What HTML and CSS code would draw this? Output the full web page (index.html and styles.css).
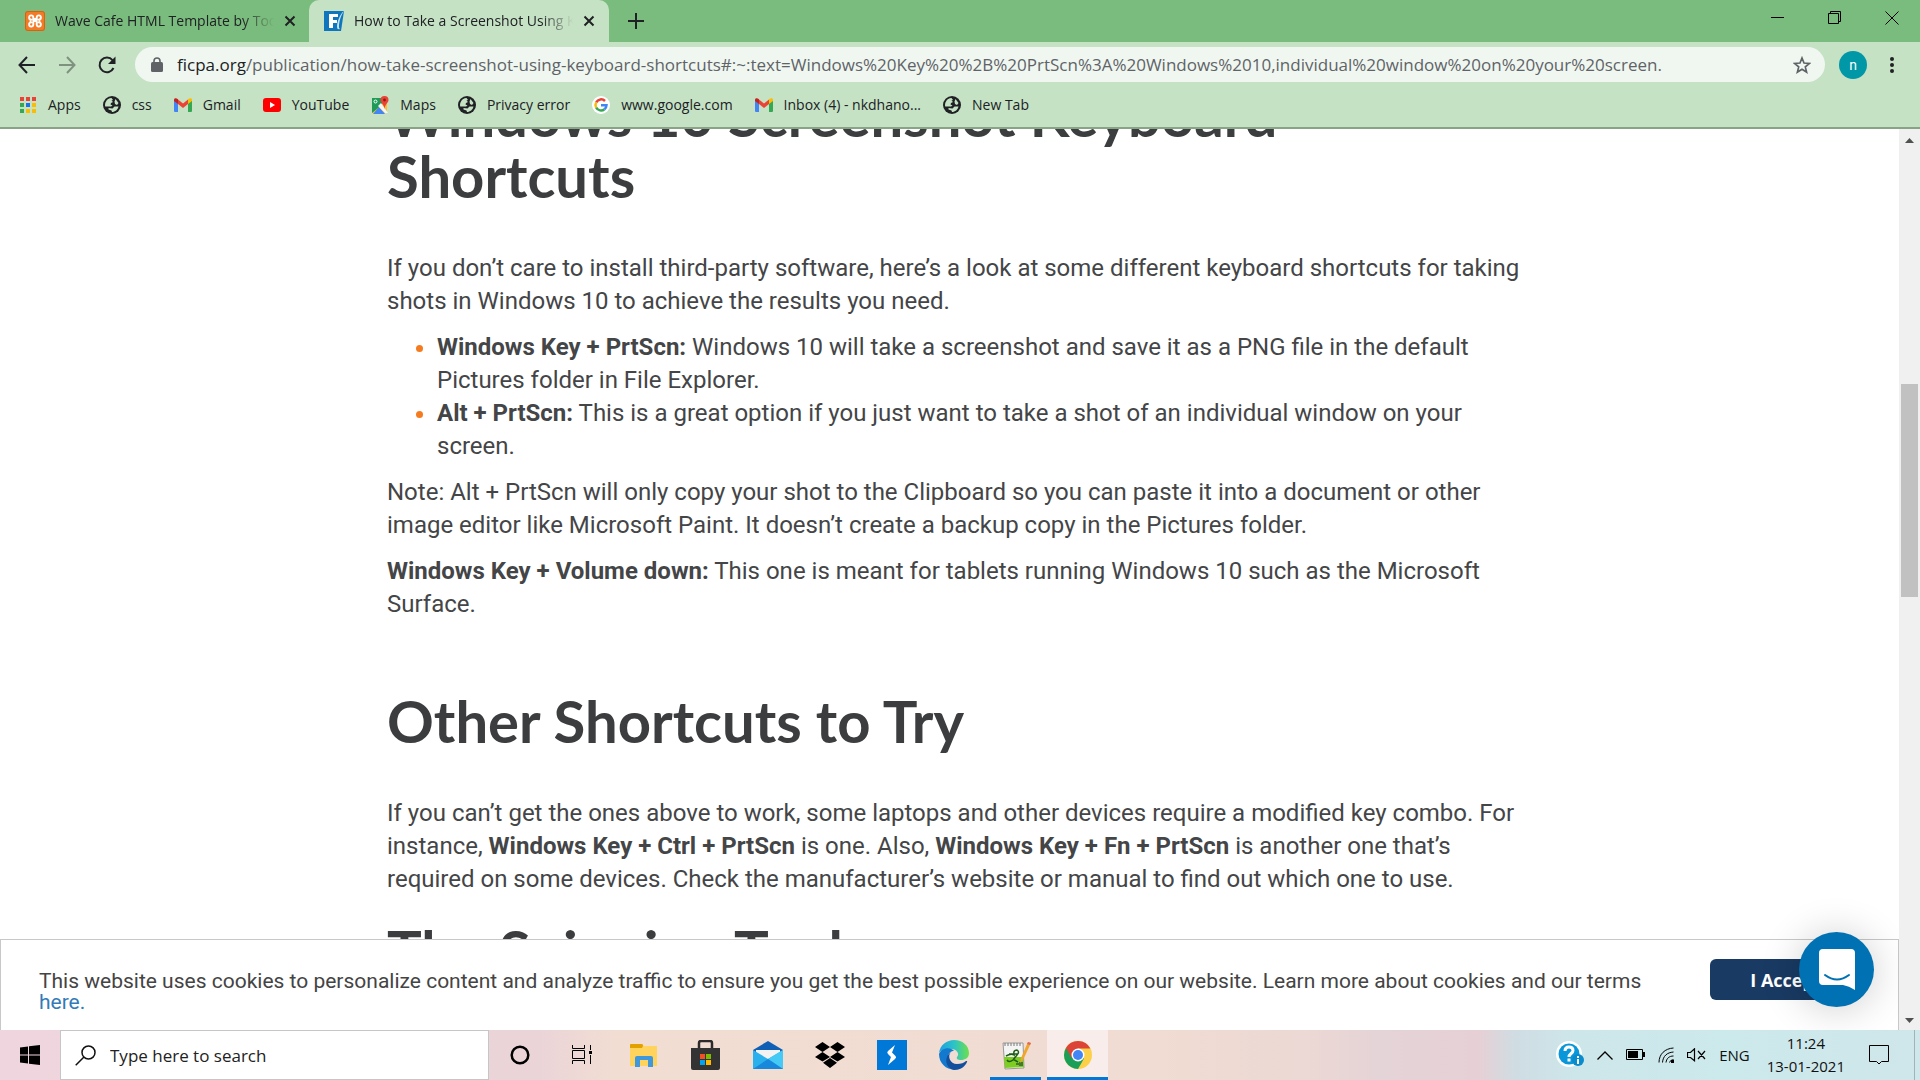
FILE: index.html
```html
<!DOCTYPE html>
<html lang="en">
<head>
<meta charset="utf-8">
<title>How to Take a Screenshot Using Keyboard Shortcuts</title>
<link rel="stylesheet" href="styles.css">
</head>
<body>
<svg class="defs" aria-hidden="true">
  <symbol id="globe" viewBox="0 0 18 18"><circle cx="9" cy="9" r="9" fill="#202124"/><path d="M3 5.500C4 3.500 6 2.300 8.500 2.100L10 4l-1.500.5L10 6 8 7 7.500 8.500 9.500 9.500 8 10.500H2.200C1.800 8.500 2.200 6.800 3 5.500ZM12.500 3l3 4L14 9 12 8 11.500 5.500ZM5.500 12 9.500 12.500 11.500 10.500 15.500 10.500C15 13.500 12 16 9 16L8.500 14.500 5.500 13.500Z" fill="#c5e2c5"/></symbol>
  <symbol id="gmail" viewBox="0 0 18 14"><path d="M0 2v11q0 1 1 1h3V5z" fill="#4285f4"/><path d="M14 5v9h3q1 0 1-1V2z" fill="#34a853"/><path d="M4 5V1.500L9 5.500 14 1.500V6L9 10 4 6z" fill="#ea4335"/><path d="M0 2C0 0 2 -.5 4 1.300V6L0 3z" fill="#c5221f"/><path d="M18 2C18 0 16 -.5 14 1.300V6L18 3z" fill="#fbbc04"/></symbol>
</svg>
<div class="browser">
  <header class="chrome">
    <div class="tabs">
      <div class="tab">
        <svg width="20" height="20" viewBox="0 0 20 20"><rect width="20" height="20" rx="3" fill="#d9620f"/><rect x="1" y="1" width="18" height="18" rx="2" fill="#f47a26"/><path d="M8.300 8V6.300A2.100 2.100 0 1 0 6 8.600a2.200 2.200 0 0 0 0 2.800 2.100 2.100 0 1 0 2.300 2.300V10h3.400v3.700a2.100 2.100 0 1 0 2.300-2.300 2.200 2.200 0 0 0 0-2.800 2.100 2.100 0 1 0-2.300-2.300V8z" fill="none" stroke="#fff" stroke-width="1.900"/></svg>
        <span class="tab-title">Wave Cafe HTML Template by Tooplate</span>
        <button class="plain" aria-label="Close tab"><svg width="12" height="12" viewBox="0 0 12 12"><path d="M1.500 1.500l9 9m0-9l-9 9" stroke="#202124" stroke-width="2"/></svg></button>
      </div>
      <div class="tab active">
        <svg width="20" height="20" viewBox="0 0 20 20"><path d="M0 0h20l-3 20H0z" fill="#0f75bc"/><path d="M5 3h9v3H9v3h4v3H9v5H5z" fill="#fff"/><path d="M20 0C17 4 15.500 9 15 14q-.5 3 1 4-3 1-3-2C13 11 16 3 20 0z" fill="#c5e2f5"/></svg>
        <span class="tab-title">How to Take a Screenshot Using Keyboard</span>
        <button class="plain" aria-label="Close tab"><svg width="12" height="12" viewBox="0 0 12 12"><path d="M1.500 1.500l9 9m0-9l-9 9" stroke="#202124" stroke-width="2"/></svg></button>
      </div>
      <button class="plain new-tab" aria-label="New tab"><svg width="16" height="16" viewBox="0 0 16 16"><path d="M8 0v16M0 8h16" stroke="#202124" stroke-width="2"/></svg></button>
      <div class="window-buttons">
        <button class="plain" aria-label="Minimize"><svg width="14" height="14" viewBox="0 0 14 14"><path d="M0 6.500h13" stroke="#000"/></svg></button>
        <button class="plain" aria-label="Restore"><svg width="14" height="14" viewBox="0 0 14 14"><path d="M.5 2.500h10v10H.5zM2.500 2.500v-2h10v10h-2" fill="none" stroke="#000"/></svg></button>
        <button class="plain" aria-label="Close"><svg width="14" height="14" viewBox="0 0 14 14"><path d="M.5.500l13 13m0-13l-13 13" stroke="#000"/></svg></button>
      </div>
    </div>
    <div class="toolbar">
      <div class="nav">
        <button class="plain" aria-label="Back"><svg width="18" height="18" viewBox="0 0 18 18"><path d="M17 9H2m7-8L1.500 9 9 17" fill="none" stroke="#202124" stroke-width="2"/></svg></button>
        <button class="plain" aria-label="Forward"><svg width="18" height="18" viewBox="0 0 18 18"><path d="M1 9h15M9 1l7.500 8L9 17" fill="none" stroke="#7f917f" stroke-width="2"/></svg></button>
        <button class="plain" aria-label="Reload"><svg width="18" height="18" viewBox="0 0 18 18"><path d="M15.500 12A7.300 7.300 0 1 1 14.500 4.200" fill="none" stroke="#202124" stroke-width="2"/><path d="M17.500.5V8H10z" fill="#202124"/></svg></button>
      </div>
      <div class="omnibox">
        <svg width="12" height="16" viewBox="0 0 12 16"><rect y="5" width="12" height="10" rx="1.500" fill="#5f6368"/><path d="M3 6V4a3 3 0 0 1 6 0v2" fill="none" stroke="#5f6368" stroke-width="1.600"/></svg>
        <div class="url"><span class="host">ficpa.org</span>/publication/how-take-screenshot-using-keyboard-shortcuts#:~:text=Windows%20Key%20%2B%20PrtScn%3A%20Windows%2010,individual%20window%20on%20your%20screen.</div>
        <button class="plain" aria-label="Bookmark this page"><svg width="18" height="18" viewBox="0 0 18 18"><path d="M9 2l2 5 5.400.4-4.100 3.500 1.300 5.200L9 13.300l-4.600 2.800 1.300-5.200L1.600 7.400 7 7z" fill="none" stroke="#5f6368" stroke-width="1.700"/></svg></button>
      </div>
      <button class="avatar" aria-label="Profile">n</button>
      <button class="plain" aria-label="Menu"><svg width="6" height="18" viewBox="0 0 6 18" fill="#202124"><circle cx="3" cy="3" r="2"/><circle cx="3" cy="9" r="2"/><circle cx="3" cy="15" r="2"/></svg></button>
    </div>
    <nav class="bookmarks">
      <a href="#"><svg width="18" height="18" viewBox="0 0 18 18"><path d="M1 1h4v4H1zM7 1h4v4H7zM13 1h4v4h-4z" fill="#ea4335"/><path d="M1 7h4v4H1zM1 13h4v4H1z" fill="#34a853"/><path d="M7 7h4v4H7z" fill="#1a73e8"/><path d="M13 7h4v4h-4zM7 13h4v4H7zM13 13h4v4h-4z" fill="#fbbc04"/></svg>Apps</a>
      <a href="#"><svg width="18" height="18"><use href="#globe"/></svg>css</a>
      <a href="#"><svg width="18" height="14"><use href="#gmail"/></svg>Gmail</a>
      <a href="#"><svg width="18" height="14" viewBox="0 0 18 14"><rect width="18" height="14" rx="3" fill="#f00"/><path d="M7 4v6l5-3z" fill="#fff"/></svg>YouTube</a>
      <a href="#"><svg width="18" height="18" viewBox="0 0 18 18"><path d="M1 2h10l5 6v9H1z" fill="#fbc02d"/><path d="M1 2h10v7L1 17z" fill="#1e9b57"/><path d="M2 18l6-7 6 7z" fill="#4285f4"/><path d="M7 10l3-3 7 10h-3z" fill="#f5f5f5"/><circle cx="4.500" cy="5.500" r="1.500" fill="none" stroke="#fff"/><path d="M13.500 0a4 4 0 0 1 4 4c0 3-3.500 4-4 9-.5-5-4-6-4-9a4 4 0 0 1 4-4z" fill="#ea4335"/><circle cx="13.500" cy="4" r="1.400" fill="#8c1a11"/></svg>Maps</a>
      <a href="#"><svg width="18" height="18"><use href="#globe"/></svg>Privacy error</a>
      <a href="#"><svg width="18" height="18" viewBox="0 0 18 18"><circle cx="9" cy="9" r="9" fill="#fff"/><g fill="none" stroke-width="2.500"><path d="M13 5A5.500 5.500 0 0 0 4.200 6.300" stroke="#ea4335"/><path d="M4.200 6.300a5.500 5.500 0 0 0 0 5.400" stroke="#fbbc04"/><path d="M4.200 11.700A5.500 5.500 0 0 0 12.500 13.200" stroke="#34a853"/><path d="M12.500 13.200A5.500 5.500 0 0 0 14.500 9.200H9" stroke="#4285f4"/></g></svg>www.google.com</a>
      <a href="#"><svg width="18" height="14"><use href="#gmail"/></svg>Inbox (4) - nkdhano...</a>
      <a href="#"><svg width="18" height="18"><use href="#globe"/></svg>New Tab</a>
    </nav>
  </header>

  <div class="viewport">
    <main class="page">
      <article class="article">
        <h2>Windows 10 Screenshot Keyboard<br>Shortcuts</h2>
        <p>If you don’t care to install third-party software, here’s a look at some different keyboard shortcuts for taking shots in Windows 10 to achieve the results you need.</p>
        <ul>
          <li><strong>Windows Key + PrtScn:</strong> Windows 10 will take a screenshot and save it as a PNG file in the default Pictures folder in File Explorer.</li>
          <li><strong>Alt + PrtScn:</strong> This is a great option if you just want to take a shot of an individual window on your screen.</li>
        </ul>
        <p>Note: Alt + PrtScn will only copy your shot to the Clipboard so you can paste it into a document or other image editor like Microsoft Paint. It doesn’t create a backup copy in the Pictures folder.</p>
        <p><strong>Windows Key + Volume down:</strong> This one is meant for tablets running Windows 10 such as the Microsoft Surface.</p>
        <h2 class="section">Other Shortcuts to Try</h2>
        <p>If you can’t get the ones above to work, some laptops and other devices require a modified key combo. For instance, <strong>Windows Key + Ctrl + PrtScn</strong> is one. Also, <strong>Windows Key + Fn + PrtScn</strong> is another one that’s required on some devices. Check the manufacturer’s website or manual to find out which one to use.</p>
        <h2 class="sub">The Snipping Tool</h2>
      </article>
      <aside class="cookies">
        <p>This website uses cookies to personalize content and analyze traffic to ensure you get the best possible experience on our website. Learn more about cookies and our terms <a href="#">here.</a></p>
        <button class="accept">I Accept</button>
      </aside>
      <button class="chat" aria-label="Open chat"><svg width="36" height="41" viewBox="0 0 36 41"><path d="M4 0h28q4 0 4 4v37q-6-4-12-5H4q-4 0-4-4V4q0-4 4-4z" fill="#fff"/><path d="M6 26q12 9 24 0" fill="none" stroke="#0071b2" stroke-width="2" stroke-linecap="round"/></svg></button>
    </main>
    <div class="scrollbar">
      <svg width="9" height="5" viewBox="0 0 9 5"><path d="M0 5l4.500-5L9 5z" fill="#505050"/></svg>
      <div class="track"><div class="thumb"></div></div>
      <svg width="9" height="5" viewBox="0 0 9 5"><path d="M0 0l4.500 5L9 0z" fill="#505050"/></svg>
    </div>
  </div>
</div>

<footer class="taskbar">
  <button class="plain start" aria-label="Start"><svg width="20" height="20" viewBox="0 0 20 20"><path d="M0 2.600L8 1.500v8H0zM9 1.300L20 0v9.500H9zM0 10.500h8v8L0 17.400zM9 10.500h11V20L9 18.700z"/></svg></button>
  <label class="search">
    <svg width="21" height="21" viewBox="0 0 21 21"><circle cx="13.500" cy="7.500" r="6.500" fill="none" stroke="#111" stroke-width="1.500"/><path d="M9 12L.7 20.300" stroke="#111" stroke-width="1.500"/></svg>
    <input type="text" aria-label="Search" placeholder="Type here to search">
  </label>
  <div class="apps">
    <button class="plain" aria-label="Cortana"><svg width="20" height="20" viewBox="0 0 20 20"><circle cx="10" cy="10" r="8.300" fill="none" stroke="#000" stroke-width="2.500"/></svg></button>
    <button class="plain" aria-label="Task view"><svg width="20" height="20" viewBox="0 0 20 20"><path d="M.5 0v3.500h12V0M.5 5.500h12v8H.5zM.5 19v-3.500h12V19M18.500 0v5M18.500 10v9" fill="none" stroke="#000"/><path d="M17 6h3v3h-3z"/></svg></button>
    <button class="plain" aria-label="File Explorer"><svg width="28" height="24" viewBox="0 0 28 24"><path d="M0 1h12l2 2h13v20H0z" fill="#ffd35c"/><path d="M0 2q0-1 1-1h11q1 0 1 2l-1 2H0z" fill="#e2a100"/><path d="M5 24V15q0-2 2-2h14q2 0 2 2v9h-5v-7h-8v7z" fill="#3f97dc"/></svg></button>
    <button class="plain" aria-label="Microsoft Store"><svg width="30" height="30" viewBox="0 0 30 30"><path d="M8 9V3q0-2 2-2h9q2 0 2 2v6" fill="none" stroke="#2b2b2b" stroke-width="2.500"/><path d="M0 8h29v20q0 2-2 2H2q-2 0-2-2z" fill="#333"/><path d="M9 14h5v5H9z" fill="#f25022"/><path d="M15 14h5v5h-5z" fill="#7fba00"/><path d="M9 20h5v5H9z" fill="#00a4ef"/><path d="M15 20h5v5h-5z" fill="#ffb900"/></svg></button>
    <button class="plain" aria-label="Mail"><svg width="30" height="28" viewBox="0 0 30 28"><path d="M0 9L15 0l15 9v4H0z" fill="#0f5fb5"/><path d="M3 9h24v12H3z" fill="#f3f3f3"/><path d="M0 9l15 9 15-9v19H0z" fill="#2bb0ee"/><path d="M15 18l15 10V9z" fill="#45c9f5"/><path d="M0 28h30L15 18z" fill="#1788dc"/></svg></button>
    <button class="plain" aria-label="Dropbox"><svg width="30" height="26" viewBox="0 0 30 26"><path d="M7.500 0L15 5 7.500 10 0 5zM22.500 0L30 5l-7.500 5L15 5zM7.500 10L15 15l-7.500 4.500L0 15zM22.500 10L30 15l-7.500 4.500L15 15zM15 16l7 4.800L15 26l-7-5.200z"/></svg></button>
    <button class="plain" aria-label="Shortcut app"><svg width="30" height="30" viewBox="0 0 30 30"><path d="M0 0h30v30H0z" fill="#0078d7"/><path d="M18 5l-7 6q-1.500 1.500 0 3l3 3-3 8 7-6q2-1.500.5-3L15 12.500z" fill="#fff"/></svg></button>
    <button class="plain" aria-label="Microsoft Edge"><svg width="30" height="30" viewBox="0 0 30 30"><defs><linearGradient id="edge-top"><stop stop-color="#1c9fe0"/><stop offset=".5" stop-color="#2cc3c8"/><stop offset="1" stop-color="#6de04b"/></linearGradient></defs><path d="M0 13C1 5 8 0 15 0c9 0 15 6 15 13 0 5-4 7-8 7-3 0-5-1-4-3 3-3 0-8-6-8C6 9 1 11 0 13z" fill="url(#edge-top)"/><path d="M0 14c2-6 11-8 15-3-5 0-7 5-5 9 2 5 8 8 12 8C12 33 0 26 0 14z" fill="#1379ce"/><path d="M12 12c-4 4-1 12 6 12 4 0 7-1 9-3 1 0 1.500.5 1 1-2 5-7 8-13 8C7 28 4 18 12 12z" fill="#124f9c"/></svg></button>
    <button class="plain running" aria-label="Notepad++"><svg width="30" height="30" viewBox="0 0 30 30"><path d="M2 3h20l1 25-19 1z" fill="#f4f4f4" stroke="#999"/><path d="M3 17h19l1 10-19 1z" fill="#7dcd22"/><path d="M4 3v3m3-3v3m3-3v3m3-3v3m3-3v3m3-3v3" stroke="#777"/><path d="M5 16q5-3 8-1-1-5 3-5 3 2 0 5l-4 5q-4 3-6 0M12 19l5 3m-9-8h9" fill="none" stroke="#1e5d16" stroke-width="1.500"/><path d="M15 24h3m1-2v4m2-4v4" stroke="#123"/><path d="M27 2l3 1-8 17-3 3 1-5z" fill="#f0a52b"/><path d="M27 2l3 1-1 2-3-1z" fill="#d66"/></svg></button>
    <button class="plain running current" aria-label="Google Chrome"><svg width="28" height="28" viewBox="0 0 28 28"><circle cx="14" cy="14" r="14" fill="#fdd04a"/><path d="M14 14L1.900 7A14 14 0 0 0 14 28l6-10.500z" fill="#1a9f59"/><path d="M14 7.500h12.400A14 14 0 0 0 1.900 7L8 17.500z" fill="#db4437"/><circle cx="14" cy="14" r="6.500" fill="#fff"/><circle cx="14" cy="14" r="5" fill="#4285f4"/></svg></button>
  </div>
  <div class="tray">
    <svg width="28" height="28" viewBox="0 0 28 28"><circle cx="13" cy="13" r="13" fill="#fff"/><circle cx="13" cy="13" r="10.500" fill="#0a97d9"/><path d="M9 10q0-4 4-4t4 3.500c0 3-4 3-4 6.500m0 1.500v3" fill="none" stroke="#fff" stroke-width="3"/><circle cx="22" cy="19" r="6" fill="#0a8ccc"/><path d="M22 15v2m0 1v5" stroke="#fff" stroke-width="2"/></svg>
    <svg width="16" height="9" viewBox="0 0 16 9"><path d="M.5 8.500L8 1l7.500 7.500" fill="none" stroke="#000" stroke-width="1.300"/></svg>
    <svg width="19" height="12" viewBox="0 0 19 12"><path d="M.5.500h16v10H.5z" fill="none" stroke="#000"/><path d="M2 2h10v7H2zM17 3h2v5h-2z"/></svg>
    <svg width="16" height="16" viewBox="0 0 16 16"><path d="M1 15.500C1 7 7 1.500 15.500 1M4.500 15.500C5 9 9 5.500 15.500 5M8 15.500c.5-4 3-6.500 7.500-6.500M11.500 15.500q.5-2.500 4-3" fill="none" stroke="#000"/><path d="M13 13h3v3h-3z"/></svg>
    <svg width="19" height="14" viewBox="0 0 19 14"><path d="M.5 4.500h3L7.500.8v12L3.500 9.500h-3zM11 3l7 8m0-8l-7 8" fill="none" stroke="#000" stroke-width="1.200"/></svg>
    <span>ENG</span>
    <time class="clock">11:24<br>13-01-2021</time>
    <svg width="20" height="20" viewBox="0 0 20 20"><path d="M.5.500h19v16h-7L10 19l-2.500-2.500h-7z" fill="none" stroke="#000"/></svg>
    <span class="desktop-edge"></span>
  </div>
</footer>
</body>
</html>
```
FILE: styles.css
```css
* { box-sizing: border-box; }

body {
  margin: 0;
  height: 100vh;
  display: flex;
  flex-direction: column;
  overflow: hidden;
  font-family: "Open Sans", "Noto Sans", sans-serif;
  color: #202124;
}

svg { display: block; flex: none; }
.defs { position: absolute; width: 0; height: 0; }

.plain {
  display: flex;
  align-items: center;
  justify-content: center;
  padding: 0;
  border: 0;
  background: none;
}

.browser { flex: 1; min-height: 0; display: flex; flex-direction: column; }
.chrome { background: #c5e2c5; border-bottom: 2px solid #8aa387; font-size: 14px; }

.tabs { display: flex; height: 42px; background: #7abc7d; }
.tab { display: flex; align-items: center; gap: 10px; width: 300px; padding: 0 14px 1px 15px; }
.tab:first-child { width: 309px; padding-left: 25px; padding-right: 13px; }
.tab.active { background: #c5e2c5; border-radius: 10px 10px 0 0; }
.tab-title {
  flex: 1;
  overflow: hidden;
  white-space: nowrap;
  -webkit-mask-image: linear-gradient(to left, transparent, #000 32px);
  mask-image: linear-gradient(to left, transparent, #000 32px);
}
.new-tab { width: 54px; }
.window-buttons { display: flex; margin-left: auto; height: 36px; }
.window-buttons button { width: 57px; }

.toolbar { display: flex; align-items: center; height: 45px; padding: 0 25px 0 18px; }
.nav { display: flex; gap: 22px; width: 117px; }
.omnibox {
  flex: 1;
  display: flex;
  align-items: center;
  gap: 14px;
  height: 35px;
  padding: 0 14px 0 16px;
  border-radius: 18px;
  background: #f0f7f0;
}
.url { flex: 1; min-width: 0; overflow: hidden; white-space: nowrap; font-size: 17px; color: #5f6368; }
.host { color: #202124; }
.avatar {
  width: 28px;
  height: 28px;
  margin: 0 22px 0 14px;
  padding: 0;
  border: 0;
  border-radius: 50%;
  background: #0097a7;
  color: #fff;
  font: 14px/28px Roboto, sans-serif;
}

.bookmarks { display: flex; align-items: center; gap: 22px; height: 40px; padding: 0 19px 5px; }
.bookmarks a { display: flex; align-items: center; gap: 11px; color: #202124; text-decoration: none; white-space: nowrap; }

.viewport { flex: 1; min-height: 0; display: flex; background: #fff; }
.page { position: relative; flex: 1; overflow: hidden; }
/* scrolled partway through the article */
.article {
  max-width: 1155px;
  margin: -45px auto 0;
  padding-left: 15px;
  font: 24px/33px Roboto, sans-serif;
  color: #444547;
}
.article h2 { margin: 0 0 46px; font: 700 58px/61px Lato, sans-serif; color: #3c3d3f; }
.article p, .article ul { margin: 0 0 13px; }
.article ul { padding-left: 50px; }
.article li::marker { color: #f47b20; }
.article .section { margin-top: 69px; }
.article .sub { margin-top: 24px; }

.cookies {
  position: absolute;
  left: 0;
  right: 0;
  bottom: 0;
  display: flex;
  align-items: flex-start;
  justify-content: space-between;
  height: 91px;
  padding: 19px 36px 0 38px;
  border: 1px solid #c8c8c8;
  border-bottom: 0;
  background: #fff;
}
.cookies p { max-width: 1640px; margin: 12px 0 0; font: 21px/21px Roboto, sans-serif; color: #444; }
.cookies a { color: #337ab7; text-decoration: none; }
.accept {
  width: 152px;
  height: 41px;
  padding: 0;
  border: 0;
  border-radius: 6px;
  background: #193a63;
  color: #fff;
  font: 700 18px "Open Sans", sans-serif;
}
.chat {
  position: absolute;
  right: 25px;
  bottom: 23px;
  display: flex;
  align-items: center;
  justify-content: center;
  width: 75px;
  height: 75px;
  padding: 0;
  border: 0;
  border-radius: 50%;
  background: #0071b2;
  box-shadow: 0 2px 40px rgba(0, 0, 0, .2);
}

.scrollbar { display: flex; flex-direction: column; align-items: center; width: 21px; padding: 9px 0 7px; background: #f0f0f0; }
.track { flex: 1; width: 17px; padding-top: 241px; }
.thumb { height: 213px; background: #c1c1c1; }

.taskbar {
  display: flex;
  height: 50px;
  font-size: 15px;
  color: #111;
  background: linear-gradient(90deg, #efd6de 0%, #ead4d8 28%, #f2ddd3 32%, #f0dcd2 60%, #ecd8d4 68%, #e4d3d7 72%, #e6d0d5 77%, #cfdde3 79%, #cde6ea 82%, #cce9ec 90%, #cfe6ea 100%);
}
.start { width: 60px; }
.search { display: flex; align-items: center; gap: 14px; width: 429px; padding: 0 14px; background: #fff; border: 1px solid #c6c6c6; }
.search input { flex: 1; padding: 0; border: 0; outline: 0; font: 17px "Open Sans", sans-serif; }
.search input::placeholder { color: #222; opacity: 1; }
.apps { display: flex; }
.apps button { width: 62px; }
.apps .running { border-bottom: 3px solid #0078d7; padding-top: 3px; width: 51px; margin: 0 5px; }
.apps .current { width: 61px; margin: 0 1px; background: #f8edeb; }
.tray { display: flex; align-items: center; gap: 13px; margin-left: auto; }
.clock { margin: 0 11px 0 4px; text-align: center; line-height: 23px; }
.desktop-edge { width: 6px; height: 50px; margin-left: 12px; border-left: 1px solid #9fb4b8; }
```
